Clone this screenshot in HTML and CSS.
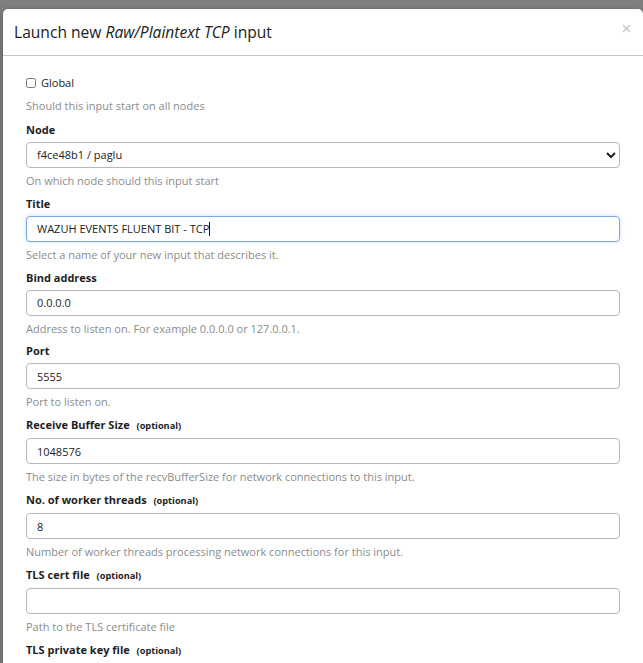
FILE: index.html
```html
<!DOCTYPE html>
<html>
<head>
<meta charset="utf-8">
<link rel="stylesheet" href="styles.css">
</head>
<body>
<div class="modal">
  <div class="modal-header">
    <h4 class="modal-title">Launch new <em>Raw/Plaintext TCP</em> input</h4>
    <span class="close" aria-label="Close">
      <svg width="9" height="9" viewBox="0 0 9 9"><path d="M1 1 L8 8 M8 1 L1 8" stroke="#c8c8c8" stroke-width="1.5" fill="none"/></svg>
    </span>
  </div>
  <div class="modal-body">
    <div class="field">
      <label class="check"><input type="checkbox" class="checkbox"> Global</label>
      <div class="help">Should this input start on all nodes</div>
    </div>
    <div class="field">
      <label class="label">Node</label>
      <select class="control select"><option>f4ce48b1 / paglu</option></select>
      <div class="help">On which node should this input start</div>
    </div>
    <div class="field">
      <label class="label">Title</label>
      <div class="caret-wrap">
        <input class="control focused" type="text" value="WAZUH EVENTS FLUENT BIT - TCP">
      </div>
      <div class="help">Select a name of your new input that describes it.</div>
    </div>
    <div class="field">
      <label class="label">Bind address</label>
      <input class="control" type="text" value="0.0.0.0">
      <div class="help">Address to listen on. For example 0.0.0.0 or 127.0.0.1.</div>
    </div>
    <div class="field">
      <label class="label">Port</label>
      <input class="control" type="text" value="5555">
      <div class="help">Port to listen on.</div>
    </div>
    <div class="field">
      <label class="label">Receive Buffer Size <span class="opt">(optional)</span></label>
      <input class="control" type="text" value="1048576">
      <div class="help">The size in bytes of the recvBufferSize for network connections to this input.</div>
    </div>
    <div class="field">
      <label class="label">No. of worker threads <span class="opt">(optional)</span></label>
      <input class="control" type="text" value="8">
      <div class="help">Number of worker threads processing network connections for this input.</div>
    </div>
    <div class="field">
      <label class="label">TLS cert file <span class="opt">(optional)</span></label>
      <input class="control" type="text" value="">
      <div class="help">Path to the TLS certificate file</div>
    </div>
    <div class="field">
      <label class="label">TLS private key file <span class="opt">(optional)</span></label>
      <input class="control" type="text" value="">
      <div class="help">Path to the TLS private key file</div>
    </div>
  </div>
</div>
</body>
</html>
```

FILE: styles.css
```css
html, body {
  margin: 0;
  padding: 0;
  height: 663px;
  overflow: hidden;
  background: #7f7f7f;
  font-family: "Open Sans", "DejaVu Sans", sans-serif;
}

.modal {
  margin: 9px 0 0 3px;
  width: 640px;
  height: 700px;
  background: #fff;
  border-radius: 5px 5px 0 0;
  box-shadow: 0 2px 6px rgba(0, 0, 0, 0.35);
}

.modal-header {
  position: relative;
  padding: 12px 11px 12px 11px;
  border-bottom: 1px solid #c4c4c4;
}

.modal-title {
  margin: 0;
  font-size: 15.6px;
  line-height: 22px;
  font-weight: 400;
  color: #222;
}

.modal-title em {
  font-style: italic;
}

.close {
  position: absolute;
  right: 12px;
  top: 15px;
  width: 9px;
  height: 9px;
  line-height: 0;
}

.modal-body {
  padding: 19px 23px 0 23px;
}

.field {
  margin-bottom: 6.86px;
}

.field:first-child {
  margin-bottom: 7.86px;
}

.check {
  display: flex;
  align-items: center;
  gap: 5px;
  font-size: 11px;
  line-height: 16px;
  color: #222;
  margin-bottom: 7px;
}

.checkbox {
  width: 10px;
  height: 10px;
  margin: 0;
}

.label {
  display: block;
  font-size: 11px;
  font-weight: 700;
  line-height: 16px;
  color: #1e1e1e;
  margin-bottom: 4px;
}

.opt {
  font-size: 9.2px;
  font-weight: 700;
  margin-left: 4px;
}

.control {
  display: block;
  box-sizing: border-box;
  width: 594px;
  height: 26px;
  margin: 0;
  padding: 0 10px;
  border: 1px solid #b9b9b9;
  border-radius: 4px;
  background: #fff;
  font-family: "Open Sans", "DejaVu Sans", sans-serif;
  font-size: 11px;
  color: #222;
  outline: none;
}

.select {
  padding-left: 6px;
}

.caret-wrap {
  position: relative;
}

.caret-wrap::after {
  content: "";
  position: absolute;
  left: 183px;
  top: 6px;
  width: 1px;
  height: 14px;
  background: #111;
}

.focused {
  border-color: #7ea6e4;
  box-shadow: 0 0 4px rgba(102, 150, 230, 0.35);
}

.help {
  margin-top: 5px;
  font-size: 11px;
  line-height: 16px;
  color: #8c8c8c;
}
```
